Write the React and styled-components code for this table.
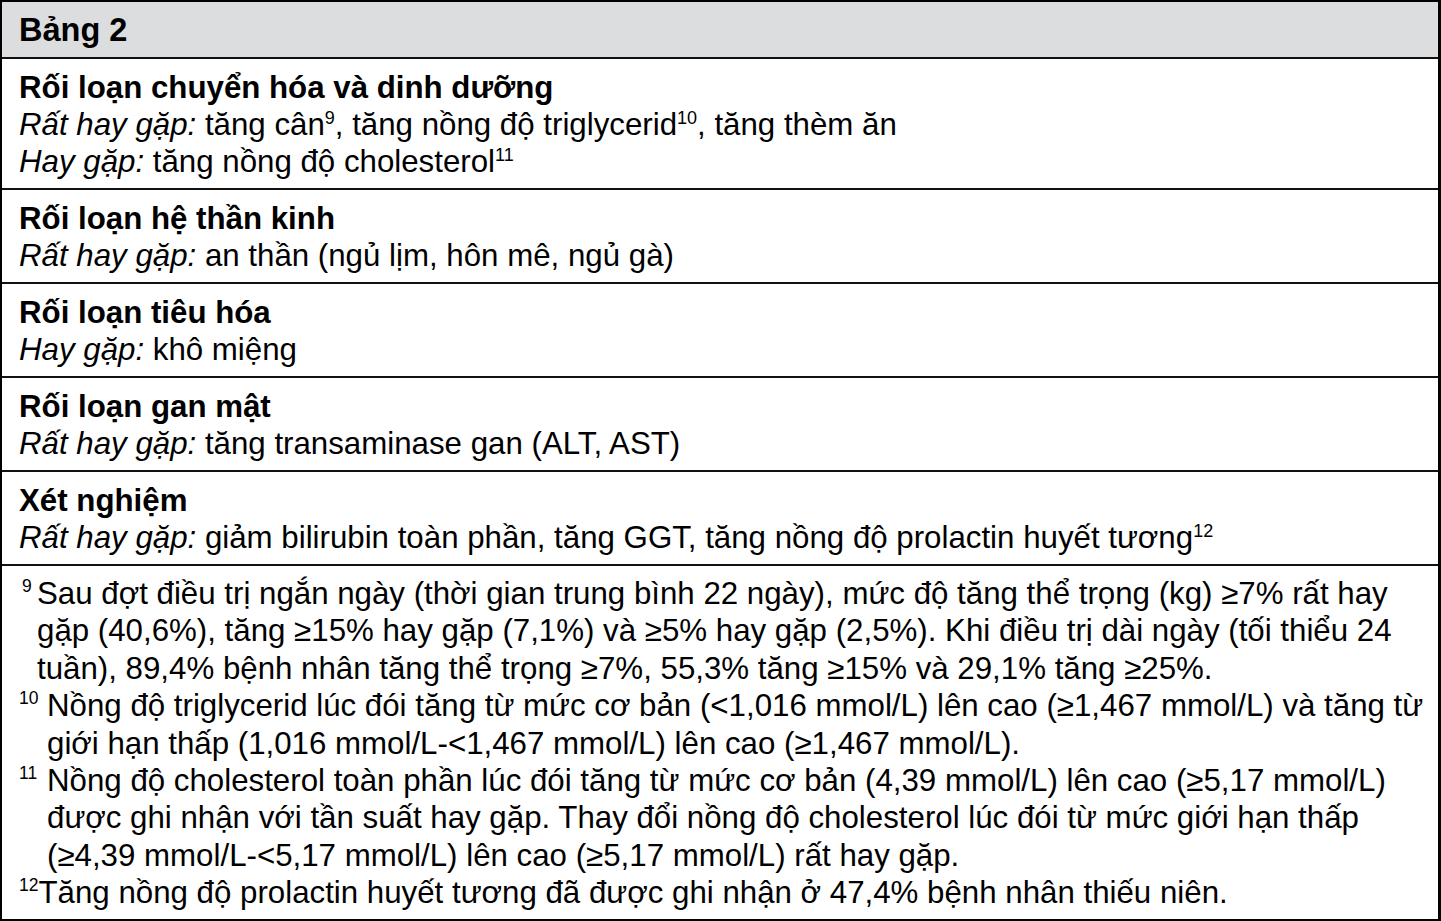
import React from "react";
import styled, { createGlobalStyle } from "styled-components";

const GlobalStyle = createGlobalStyle`
  html, body {
    margin: 0;
    padding: 0;
    background: #ffffff;
  }
  body {
    font-family: "Liberation Sans", Arial, sans-serif;
    color: #000;
  }
`;

const Table = styled.div`
  box-sizing: border-box;
  width: 1441px;
  border: 2px solid #000;
  border-right-width: 3px;
  border-bottom-width: 3px;
  font-size: 31.25px;
  line-height: 37px;
`;

const Header = styled.div`
  background: #dcdddf;
  padding: 10px 17px 8px;
  font-size: 32.5px;
  font-weight: bold;
  border-bottom: 2px solid #111;
`;

const Section = styled.div`
  padding: 10px 12px 8px 17px;
  border-bottom: 2px solid #111;
`;

const Title = styled.div`
  font-weight: bold;
`;

const Line = styled.div``;

const Label = styled.em`
  font-style: italic;
`;

const Sup = styled.sup`
  font-size: 18px;
  line-height: 0;
  vertical-align: 11px;
`;

const Footnotes = styled.div`
  padding: 9px 10px 7px 17px;
  line-height: 37.4px;
`;

const Note = styled.div`
  display: flex;
  align-items: flex-start;
`;

const Num = styled.span`
  flex: 0 0 ${(p) => p.$w}px;
  box-sizing: border-box;
  padding-left: ${(p) => p.$indent || 0}px;
  padding-top: 3px;
  font-size: 17.5px;
  line-height: 1;
`;

const NoteText = styled.div`
  flex: 1;
`;

const sections = [
  {
    title: "Rối loạn chuyển hóa và dinh dưỡng",
    lines: [
      [
        "Rất hay gặp:",
        <>
          {" "}tăng cân<Sup>9</Sup>, tăng nồng độ triglycerid<Sup>10</Sup>, tăng thèm ăn
        </>,
      ],
      [
        "Hay gặp:",
        <>
          {" "}tăng nồng độ cholesterol<Sup>11</Sup>
        </>,
      ],
    ],
  },
  {
    title: "Rối loạn hệ thần kinh",
    lines: [["Rất hay gặp:", " an thần (ngủ lịm, hôn mê, ngủ gà)"]],
  },
  {
    title: "Rối loạn tiêu hóa",
    lines: [["Hay gặp:", " khô miệng"]],
  },
  {
    title: "Rối loạn gan mật",
    lines: [["Rất hay gặp:", " tăng transaminase gan (ALT, AST)"]],
  },
  {
    title: "Xét nghiệm",
    lines: [
      [
        "Rất hay gặp:",
        <>
          {" "}giảm bilirubin toàn phần, tăng GGT, tăng nồng độ prolactin huyết tương<Sup>12</Sup>
        </>,
      ],
    ],
  },
];

const notes = [
  {
    n: "9",
    w: 18,
    indent: 3,
    text: "Sau đợt điều trị ngắn ngày (thời gian trung bình 22 ngày), mức độ tăng thể trọng (kg) ≥7% rất hay gặp (40,6%), tăng ≥15% hay gặp (7,1%) và ≥5% hay gặp (2,5%). Khi điều trị dài ngày (tối thiểu 24 tuần), 89,4% bệnh nhân tăng thể trọng ≥7%, 55,3% tăng ≥15% và 29,1% tăng ≥25%.",
  },
  {
    n: "10",
    w: 28,
    text: "Nồng độ triglycerid lúc đói tăng từ mức cơ bản (<1,016 mmol/L) lên cao (≥1,467 mmol/L) và tăng từ giới hạn thấp (1,016 mmol/L-<1,467 mmol/L) lên cao (≥1,467 mmol/L).",
  },
  {
    n: "11",
    w: 28,
    text: "Nồng độ cholesterol toàn phần lúc đói tăng từ mức cơ bản (4,39 mmol/L) lên cao (≥5,17 mmol/L) được ghi nhận với tần suất hay gặp. Thay đổi nồng độ cholesterol lúc đói từ mức giới hạn thấp (≥4,39 mmol/L-<5,17 mmol/L) lên cao (≥5,17 mmol/L) rất hay gặp.",
  },
  {
    n: "12",
    w: 19,
    text: "Tăng nồng độ prolactin huyết tương đã được ghi nhận ở 47,4% bệnh nhân thiếu niên.",
  },
];

export default function App() {
  return (
    <>
      <GlobalStyle />
      <Table>
        <Header>Bảng 2</Header>
        {sections.map((s) => (
          <Section key={s.title}>
            <Title>{s.title}</Title>
            {s.lines.map((l, i) => (
              <Line key={i}>
                <Label>{l[0]}</Label>
                {l[1]}
              </Line>
            ))}
          </Section>
        ))}
        <Footnotes>
          {notes.map((f) => (
            <Note key={f.n}>
              <Num $w={f.w} $indent={f.indent}>
                {f.n}
              </Num>
              <NoteText>{f.text}</NoteText>
            </Note>
          ))}
        </Footnotes>
      </Table>
    </>
  );
}
